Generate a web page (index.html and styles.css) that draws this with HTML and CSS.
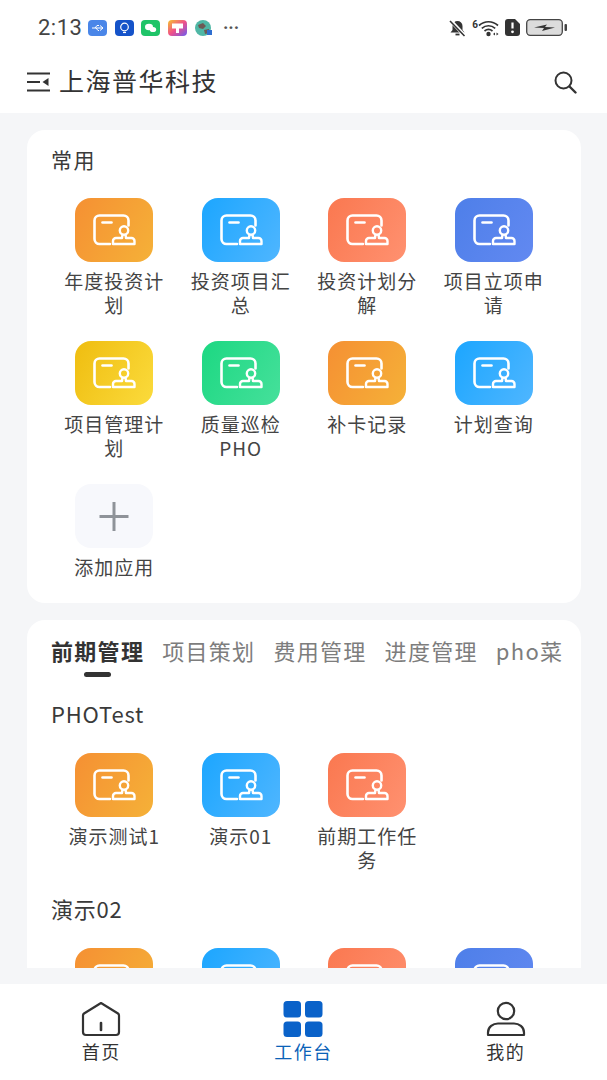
FILE: index.html
```html
<!DOCTYPE html>
<html lang="zh">
<head>
    <meta charset="utf-8">
    <title>工作台</title>
    <link rel="stylesheet" href="styles.css">
</head>
<body>
    <svg class="defs" width="0" height="0">
        <symbol id="app" viewBox="0 0 78 64">
            <path d="M53.500 27.500V22.500a5 5 0 0 0-5-5H24.500a5 5 0 0 0-5 5V41a5 5 0 0 0 5 5H35" fill="none" stroke="#fff" stroke-width="2.600" stroke-linecap="round"/>
            <path d="M27.500 24.500H36.500" fill="none" stroke="#fff" stroke-width="2.600" stroke-linecap="round"/>
            <circle cx="49" cy="32.500" r="4.200" fill="none" stroke="#fff" stroke-width="2.400"/>
            <path d="M47.500 36.500l-.5 3.500H41a3 3 0 0 0-3 3V46H59.500V43a3 3 0 0 0-3-3H51l-.5-3.500" fill="none" stroke="#fff" stroke-width="2.400" stroke-linejoin="round"/>
        </symbol>
    </svg>

    <div class="statusbar">
        <span class="time">2:13</span>
        <svg class="note" viewBox="0 0 19 16"><rect width="19" height="16" rx="4" fill="#4a86e8"/><path d="M4 8h11M12 5.500l3 2.500-3 2.500M7 8l2-2.500h2M8 8l2 2.500h1" fill="none" stroke="#fff" stroke-width="1"/></svg>
        <svg class="note" viewBox="0 0 19 16"><rect width="19" height="16" rx="4" fill="#1553c9"/><circle cx="9.500" cy="7" r="3.800" fill="none" stroke="#fff" stroke-width="1.200"/><path d="M8 12.500h3" stroke="#fff" stroke-width="1.200"/></svg>
        <svg class="note" viewBox="0 0 19 16"><rect width="19" height="16" rx="4" fill="#1fc468"/><ellipse cx="8" cy="7" rx="4" ry="3.200" fill="#fff"/><ellipse cx="12" cy="9.500" rx="3.200" ry="2.600" fill="#fff"/></svg>
        <svg class="note" viewBox="0 0 19 16"><defs><linearGradient id="rainbow" x1="0" y1="0" x2="1" y2="1"><stop offset="0" stop-color="#f6c32c"/><stop offset=".5" stop-color="#f0508a"/><stop offset="1" stop-color="#6a5cf0"/></linearGradient></defs><rect width="19" height="16" rx="4" fill="url(#rainbow)"/><path d="M4 3.500h11v5H11V13H8V8.500H4z" fill="#fff"/></svg>
        <svg class="note" viewBox="0 0 19 16"><circle cx="9" cy="8" r="8" fill="#4fb7a5"/><path d="M4 5l5-2 3 3-3 3-4-1zM10 10l5-1v4l-4 1z" fill="#6d5a55"/><rect x="13" y="10" width="5" height="5" fill="#2f6fd0"/></svg>
        <span class="more">···</span>
        <span class="status-right">
            <svg width="19" height="18" viewBox="0 0 18 18"><path d="M9 2a5 5 0 0 0-5 5v4l-2 2.500h14L14 11V7a5 5 0 0 0-5-5z" fill="#333"/><path d="M7 15.500h4" stroke="#333" stroke-width="1.800"/><path d="M2 1.500l14 15" stroke="#fff" stroke-width="3.500"/><path d="M1.500 2l14.500 15" stroke="#333" stroke-width="1.600"/></svg>
            <span class="wifi-num">6</span>
            <svg class="wifi" width="21" height="18" viewBox="0 0 21 18"><path d="M1 6.500c5.500-5 13.500-5 19 0M3.800 9.300c4-3.400 9.400-3.400 13.400 0M6.500 12c2.300-1.800 5.700-1.800 8 0" fill="none" stroke="#333" stroke-width="1.700"/><circle cx="10.500" cy="15" r="2.200" fill="#333"/><path d="M15 15l2-1.500v3zM20.500 15l-2-1.500v3z" fill="#333"/></svg>
            <svg width="15" height="17" viewBox="0 0 15 17"><path d="M3 0h7l5 5v9a3 3 0 0 1-3 3H3a3 3 0 0 1-3-3V3a3 3 0 0 1 3-3z" fill="#333"/><path d="M7.500 3.500v6" stroke="#fff" stroke-width="2.200"/><circle cx="7.500" cy="12.800" r="1.400" fill="#fff"/></svg>
            <svg class="battery" width="42" height="17" viewBox="0 0 42 17"><rect x=".7" y=".7" width="35.600" height="15.600" rx="3.500" fill="#dcdcdc" stroke="#444" stroke-width="1.300"/><path d="M8 8.500l13-3-2 2.500 10 .5-13 3.500 2-3z" fill="#333"/><rect x="38.500" y="5" width="2.500" height="7" rx="1" fill="#444"/></svg>
        </span>
    </div>

    <header class="topbar">
        <svg class="menu-icon" width="24" height="20" viewBox="0 0 24 20"><path d="M0 1.500h23M0 10h13M0 18.500h23" stroke="#333" stroke-width="2.200"/><path d="M21.500 6v8l-6-4z" fill="#333"/></svg>
        <h1 class="title">上海普华科技</h1>
        <svg class="search" width="24" height="24" viewBox="0 0 24 24"><circle cx="10.500" cy="10.500" r="8" fill="none" stroke="#333" stroke-width="2"/><path d="M16.500 16.500l6 6" stroke="#333" stroke-width="2.400" stroke-linecap="round"/></svg>
    </header>

    <main class="content">
        <section class="card">
            <h2 class="card-title">常用</h2>
            <div class="apps">
                <div class="app"><div class="tile orange"><svg><use href="#app"/></svg></div><p>年度投资计划</p></div>
                <div class="app"><div class="tile blue"><svg><use href="#app"/></svg></div><p>投资项目汇总</p></div>
                <div class="app"><div class="tile coral"><svg><use href="#app"/></svg></div><p>投资计划分解</p></div>
                <div class="app"><div class="tile indigo"><svg><use href="#app"/></svg></div><p>项目立项申请</p></div>
                <div class="app"><div class="tile yellow"><svg><use href="#app"/></svg></div><p>项目管理计划</p></div>
                <div class="app"><div class="tile green"><svg><use href="#app"/></svg></div><p>质量巡检PHO</p></div>
                <div class="app"><div class="tile orange"><svg><use href="#app"/></svg></div><p>补卡记录</p></div>
                <div class="app"><div class="tile blue"><svg><use href="#app"/></svg></div><p>计划查询</p></div>
                <div class="app"><div class="tile add"><svg viewBox="0 0 78 64"><path d="M39 18v29M24.500 32.500h29" stroke="#8f9399" stroke-width="3"/></svg></div><p>添加应用</p></div>
            </div>
        </section>

        <section class="card card-clipped">
            <div class="tabs">
                <span class="tab active">前期管理</span>
                <span class="tab">项目策划</span>
                <span class="tab">费用管理</span>
                <span class="tab">进度管理</span>
                <span class="tab">pho菜</span>
            </div>
            <h2 class="group-title">PHOTest</h2>
            <div class="apps">
                <div class="app"><div class="tile orange"><svg><use href="#app"/></svg></div><p>演示测试1</p></div>
                <div class="app"><div class="tile blue"><svg><use href="#app"/></svg></div><p>演示01</p></div>
                <div class="app"><div class="tile coral"><svg><use href="#app"/></svg></div><p>前期工作任务</p></div>
            </div>
            <h2 class="group-title">演示02</h2>
            <div class="apps">
                <div class="app"><div class="tile orange"><svg><use href="#app"/></svg></div></div>
                <div class="app"><div class="tile blue"><svg><use href="#app"/></svg></div></div>
                <div class="app"><div class="tile coral"><svg><use href="#app"/></svg></div></div>
                <div class="app"><div class="tile indigo"><svg><use href="#app"/></svg></div></div>
            </div>
        </section>
    </main>

    <nav class="tabbar">
        <div class="nav-item">
            <svg width="40" height="36" viewBox="0 0 40 36"><path d="M20 2L3 12.500a2.500 2.500 0 0 0-1 2V31a3 3 0 0 0 3 3h30a3 3 0 0 0 3-3V14.500a2.500 2.500 0 0 0-1-2z" fill="none" stroke="#333" stroke-width="2.200" stroke-linejoin="round"/><path d="M20 22v7" stroke="#333" stroke-width="2.600" stroke-linecap="round"/></svg>
            <span>首页</span>
        </div>
        <div class="nav-item current">
            <svg width="40" height="36" viewBox="0 0 40 36"><rect x=".5" y="0" width="17.500" height="16.500" rx="3.500" fill="#0a62c9"/><rect x="22" y="0" width="17.500" height="16.500" rx="3.500" fill="#0a62c9"/><rect x=".5" y="20.500" width="17.500" height="15.500" rx="3.500" fill="#0a62c9"/><rect x="22" y="20.500" width="17.500" height="15.500" rx="3.500" fill="#0a62c9"/></svg>
            <span>工作台</span>
        </div>
        <div class="nav-item">
            <svg width="40" height="36" viewBox="0 0 40 36"><circle cx="20" cy="10" r="8.200" fill="none" stroke="#333" stroke-width="2.200"/><path d="M2 34v-2.500C2 26 7 22.500 12 22.500h16c5 0 10 3.500 10 9V34z" fill="none" stroke="#333" stroke-width="2.200" stroke-linejoin="round"/></svg>
            <span>我的</span>
        </div>
    </nav>
</body>
</html>
```

FILE: styles.css
```css
* {
    box-sizing: border-box;
}

html, body {
    margin: 0;
    height: 1080px;
}

body {
    display: flex;
    flex-direction: column;
    overflow: hidden;
    font-family: "Noto Sans CJK SC", "Noto Sans", sans-serif;
    color: #3a3a3a;
    background-color: #f5f6f8;
}

.defs {
    position: absolute;
}

.statusbar {
    display: flex;
    align-items: center;
    height: 55px;
    padding: 0 39px 0 38px;
    background-color: #fff;
}

.time {
    font-family: Roboto, sans-serif;
    font-size: 22px;
    letter-spacing: 0.5px;
    color: #444;
    margin-right: 6px;
}

.note {
    width: 19px;
    height: 16px;
    margin-right: 7.500px;
}

.more {
    font-family: Roboto, sans-serif;
    font-size: 18px;
    font-weight: 700;
    color: #555;
    margin-left: 2px;
}

.status-right {
    display: flex;
    align-items: center;
    margin-left: auto;
}

.wifi-num {
    font-family: Roboto, sans-serif;
    font-size: 10px;
    font-weight: 700;
    align-self: flex-start;
    margin: 0 0 0 5px;
    color: #333;
}

.wifi {
    margin-right: 6px;
}

.battery {
    margin-left: 6px;
}

.topbar {
    display: flex;
    align-items: center;
    height: 58px;
    padding: 0 27px 4px;
    background-color: #fff;
}

.title {
    margin: 0 0 4px 8px;
    font-size: 25px;
    font-weight: 400;
    letter-spacing: 1.500px;
    color: #333;
}

.search {
    margin-left: auto;
    margin-right: 3px;
}

.content {
    flex: 1;
    display: flex;
    flex-direction: column;
    gap: 17px;
    min-height: 0;
    padding: 17px 26px 16px 27px;
}

.card {
    flex: none;
    height: 473px;
    padding: 18px 24px 0;
    background-color: #fff;
    border-radius: 18px;
}

.card-clipped {
    flex: 1;
    height: auto;
    min-height: 0;
    padding-top: 17px;
    overflow: hidden;
    border-radius: 18px 18px 0 0;
}

.card-title {
    margin: 0 0 26px;
    font-size: 21px;
    line-height: 24px;
    height: 24px;
    font-weight: 400;
    letter-spacing: 1.500px;
    transform: translateY(-1px);
}

.apps {
    display: grid;
    grid-template-columns: repeat(4, 126.500px);
    grid-auto-rows: 143px;
}

.app {
    display: flex;
    flex-direction: column;
    align-items: center;
}

.app p {
    width: 106px;
    margin: 7px 0 0;
    font-size: 19px;
    line-height: 24px;
    letter-spacing: 1px;
    text-align: center;
    overflow-wrap: anywhere;
    color: #444;
}

.tile {
    flex: none;
    width: 78px;
    height: 64px;
    border-radius: 16px;
}

.tile svg {
    display: block;
    width: 78px;
    height: 64px;
}

.orange { background: linear-gradient(120deg, #f59033, #f5b138); }
.blue { background: linear-gradient(120deg, #1ca6ff, #4fb6ff); }
.coral { background: linear-gradient(120deg, #fa7850, #ff9170); }
.indigo { background: linear-gradient(120deg, #4e7fe9, #6289f1); }
.yellow { background: linear-gradient(120deg, #efbd10, #fbdb3c); }
.green { background: linear-gradient(120deg, #1cd882, #46e09b); }
.add { background-color: #f7f8fc; }

.tabs {
    display: flex;
    gap: 18px;
    height: 64px;
    font-size: 22px;
    line-height: 26px;
    letter-spacing: 1.300px;
    white-space: nowrap;
    color: #7d7d7d;
}

.tab {
    flex: none;
}

.tab.active {
    font-weight: 700;
    color: #333;
}

.tab.active::after {
    content: "";
    display: block;
    width: 27px;
    height: 5px;
    margin: 9px auto 0;
    border-radius: 3px;
    background-color: #333;
}

.group-title {
    margin: 0 0 28px;
    font-size: 22px;
    line-height: 24px;
    font-weight: 400;
    letter-spacing: 0.800px;
    color: #3a3a3a;
}

.tabbar {
    flex: none;
    display: grid;
    grid-template-columns: repeat(3, 1fr);
    height: 96px;
    padding-top: 17px;
    background-color: #fff;
}

.nav-item {
    display: flex;
    flex-direction: column;
    align-items: center;
    gap: 2px;
    font-size: 18px;
    line-height: 24px;
    letter-spacing: 1.500px;
    color: #333;
}

.nav-item.current {
    color: #0a62b8;
}
```
